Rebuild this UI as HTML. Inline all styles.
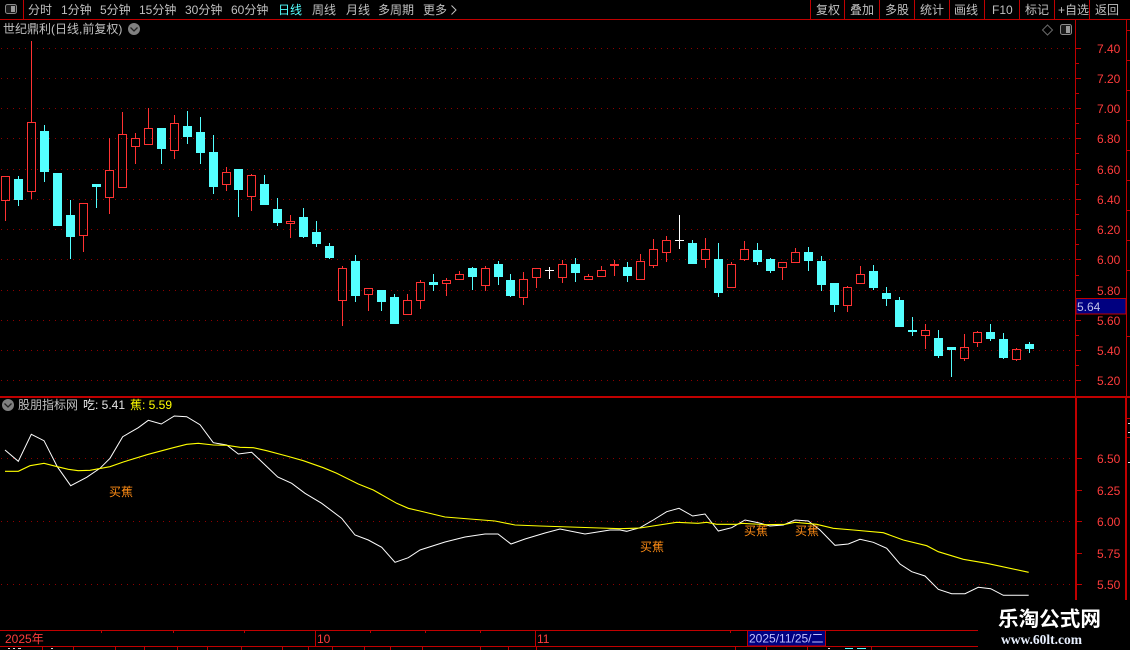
<!DOCTYPE html>
<html><head><meta charset="utf-8"><title>K</title>
<style>
html,body{margin:0;padding:0;background:#000;width:1130px;height:650px;overflow:hidden}
svg{display:block;position:absolute;left:0;top:0}
text{font-family:"Liberation Sans","WenQuanYi Zen Hei","Noto Sans CJK SC",sans-serif;font-size:12px}
.g{fill:#c0c0c0}.r{fill:#ff3c3c}.o{fill:#ff8c14}
</style></head><body>
<svg width="1130" height="650" viewBox="0 0 1130 650">
<rect width="1130" height="650" fill="#000"/>
<!-- grid -->
<g stroke="#8f0000" stroke-width="1" stroke-dasharray="1 5" shape-rendering="crispEdges">
<path d="M1 48.5H1075M1 78.5H1075M1 108.5H1075M1 138.5H1075M1 169.5H1075M1 199.5H1075M1 229.5H1075M1 259.5H1075M1 290.5H1075M1 320.5H1075M1 350.5H1075M1 380.5H1075M1 458.5H1075M1 521.5H1075M1 584.5H1075"/>
</g>
<!-- frame -->
<g stroke="#c00000" stroke-width="1" fill="none" shape-rendering="crispEdges">
<path d="M0 19.5H1130M23.5 0V19M810.5 0V19M844.5 0V19M879.5 0V19M914.5 0V19M949.5 0V19M984.5 0V19M1019.5 0V19M1054.5 0V19M1089.5 0V19"/>
<path d="M1075.5 20V396M1126.5 20V396"/>
<path d="M0 630.5H978M0 646.5H978"/>
<path d="M315.5 630V646M535.5 630V646M101.5 630V633M173.5 630V633M244.5 630V633M370.5 630V633M425.5 630V633M480.5 630V633M730.5 630V633"/>
<path d="M42.5 646V650M73.5 646V650M115.5 646V650M144.5 646V650M177.5 646V650M207.5 646V650M241.5 646V650M282.5 646V650M308.5 646V650M332.5 646V650M364.5 646V650M390.5 646V650M422.5 646V650M480.5 646V650M508.5 646V650M536.5 646V650M735.5 646V650M766.5 646V650M807.5 646V650M871.5 646V650"/>
<!-- axis ticks -->
<path d="M1076 48.5h5M1076 78.5h5M1076 108.5h5M1076 138.5h5M1076 169.5h5M1076 199.5h5M1076 229.5h5M1076 259.5h5M1076 290.5h5M1076 320.5h5M1076 350.5h5M1076 380.5h5M1076 63.5h3M1076 93.5h3M1076 123.5h3M1076 153.5h3M1076 184.5h3M1076 214.5h3M1076 244.5h3M1076 275.5h3M1076 305.5h3M1076 335.5h3M1076 365.5h3"/>
<path d="M1077 458.5h5M1077 490.5h5M1077 521.5h5M1077 553.5h5M1077 584.5h5"/>
<path d="M1127 30.5h3M1127 60.5h3M1127 90.5h3M1127 120.5h3M1127 150.5h3M1127 180.5h3M1127 210.5h3M1127 240.5h3M1127 270.5h3M1127 336.5h3M1127 418.5h3M1127 437.5h3"/>
</g>
<rect x="0" y="396" width="1130" height="2" fill="#c00000"/>
<rect x="1075" y="396" width="2" height="204" fill="#c00000"/>
<rect x="1125" y="396" width="2" height="204" fill="#c00000"/>
<path d="M1128 423.5h2M1128 432.5h2M1128 462.5h2" stroke="#ddd" shape-rendering="crispEdges"/>
<!-- red wicks + bodies -->
<path shape-rendering="crispEdges" fill="none" stroke="#ff3232" stroke-width="1" d="
M5.5 200V221M1.5 176.5h8v24h-8z
M31.5 41V122M31.5 191V199M27.5 122.5h8v69h-8z
M83.5 235V252M79.5 203.5h8v32h-8z
M109.5 138V170M109.5 197V214M105.5 170.5h8v27h-8z
M122.5 112V134M118.5 134.5h8v53h-8z
M135.5 133V138M135.5 146V164M131.5 138.5h8v8h-8z
M148.5 108V128M144.5 128.5h8v16h-8z
M174.5 115V123M174.5 150V159M170.5 123.5h8v27h-8z
M226.5 167V172M226.5 184V191M222.5 172.5h8v12h-8z
M251.5 174V175M251.5 196V211M247.5 175.5h8v21h-8z
M290.5 215V221M290.5 223V238M286.5 221.5h8v2h-8z
M342.5 266V268M342.5 300V326M338.5 268.5h8v32h-8z
M368.5 294V311M364.5 288.5h8v6h-8z
M407.5 294V300M403.5 300.5h8v14h-8z
M420.5 280V282M420.5 300V309M416.5 282.5h8v18h-8z
M446.5 278V280M446.5 283V296M442.5 280.5h8v3h-8z
M459.5 271V274M455.5 274.5h8v5h-8z
M485.5 266V268M485.5 285V291M481.5 268.5h8v17h-8z
M523.5 272V279M523.5 297V305M519.5 279.5h8v18h-8z
M536.5 277V288M532.5 268.5h8v9h-8z
M562.5 260V264M562.5 277V283M558.5 264.5h8v13h-8z
M588.5 274V276M584.5 276.5h8v3h-8z
M601.5 266V270M597.5 270.5h8v6h-8z
M614.5 260V276M610.5 264.5h8v1h-8z
M640.5 254V261M636.5 261.5h8v18h-8z
M653.5 239V249M653.5 265V268M649.5 249.5h8v16h-8z
M666.5 236V240M666.5 252V262M662.5 240.5h8v12h-8z
M705.5 238V249M705.5 259V268M701.5 249.5h8v10h-8z
M731.5 262V264M727.5 264.5h8v23h-8z
M744.5 241V249M744.5 259V261M740.5 249.5h8v10h-8z
M782.5 267V280M778.5 262.5h8v5h-8z
M795.5 248V252M791.5 252.5h8v10h-8z
M847.5 286V287M847.5 305V312M843.5 287.5h8v18h-8z
M860.5 266V274M860.5 283V284M856.5 274.5h8v9h-8z
M925.5 324V330M925.5 335V349M921.5 330.5h8v5h-8z
M964.5 334V347M964.5 358V361M960.5 347.5h8v11h-8z
M977.5 331V332M977.5 342V347M973.5 332.5h8v10h-8z
M1016.5 348V349M1016.5 359V361M1012.5 349.5h8v10h-8z"/>
<!-- cyan wicks -->
<path shape-rendering="crispEdges" fill="none" stroke="#54ffff" stroke-width="1" d="
M18.5 176V206M44.5 125V182M70.5 200V259M96.5 187V208M161.5 128V164M187.5 111V144M200.5 117V164M213.5 135V194M238.5 169V217M264.5 175V205M277.5 198V226M303.5 208V238M316.5 221V247M329.5 243V259M355.5 255V302M381.5 290V311M394.5 294V324M433.5 274V291M472.5 267V290M498.5 261V285M510.5 274V297M575.5 258V282M627.5 262V282M692.5 240V264M718.5 243V297M757.5 243V265M770.5 258V273M808.5 247V271M821.5 256V291M834.5 283V312M873.5 265V290M886.5 287V306M899.5 297V327M912.5 317V336M938.5 330V358M951.5 347V377M990.5 324V341M1003.5 333V359M1029.5 342V353"/>
<!-- cyan bodies -->
<path shape-rendering="crispEdges" fill="#54ffff" d="
M14 179h9v21h-9zM40 131h9v41h-9zM53 173h9v53h-9zM66 215h9v22h-9zM92 184h9v3h-9zM157 128h9v21h-9zM183 126h9v11h-9zM196 132h9v21h-9zM209 152h9v35h-9zM234 169h9v21h-9zM260 184h9v21h-9zM273 209h9v14h-9zM299 217h9v20h-9zM312 232h9v12h-9zM325 246h9v12h-9zM351 261h9v35h-9zM377 290h9v12h-9zM390 297h9v27h-9zM429 282h9v3h-9zM468 268h9v9h-9zM494 264h9v13h-9zM506 280h9v16h-9zM571 264h9v9h-9zM623 267h9v9h-9zM688 243h9v21h-9zM714 259h9v34h-9zM753 250h9v12h-9zM766 259h9v12h-9zM804 252h9v9h-9zM817 261h9v24h-9zM830 283h9v22h-9zM869 271h9v17h-9zM882 293h9v6h-9zM895 300h9v27h-9zM908 330h9v2h-9zM934 338h9v18h-9zM947 347h9v3h-9zM986 332h9v7h-9zM999 339h9v19h-9zM1025 344h9v5h-9z"/>
<!-- white crosses -->
<path shape-rendering="crispEdges" fill="none" stroke="#fff" d="M549.5 267V279M545 270.5h9M679.5 215V249M675 240.5h9"/>
<!-- indicator lines -->
<polyline fill="none" stroke="#ffffff" stroke-width="1" points="5,450 18.3,461.3 31.3,434.3 44,440.7 57.3,466.7 70.7,485.7 86.7,477.3 100,468.3 110,458.3 122.7,436.7 138.3,427.7 148.3,420.3 161.3,424 174.3,416 186.7,416.7 200,424.7 213.3,442.7 226.7,445 238.3,454 251.7,452.3 263.3,463.3 277.7,477 291.7,483.3 305,493.3 321.7,503.3 341.7,518.3 355,535 368.3,540 381.7,547.3 395,562.3 408.3,557.7 420,550 445,542 465,537 485,534 498,534 511,544 525,539 545,533 560,529 585,534 610,530 620,530 626.7,531.3 640,527.7 653.3,520 666.7,511.7 679,508.3 692.7,516 705,514 718.3,531 731.7,527.7 745,520 758.3,522.7 770,526 783.3,525 795,520 808.3,521 820,530 835,545.3 848.3,544 860,539.3 873.3,542.3 886.7,548.3 900,564 911.7,571.7 925,576 938.3,589.3 951.7,593.7 965,593.7 978.3,587.3 990.7,588.7 1003.3,595.3 1028.7,595.3"/>
<polyline fill="none" stroke="#ffff00" stroke-width="1.1" points="5,471.3 18.3,471.3 30,465.7 44,463.3 57.3,466.7 68.3,469.3 78.3,470.7 90,470.3 110,466.7 123.3,462 148.3,454.3 173.3,447.7 186.7,444.3 198.3,443.3 213.3,445 226.7,445.3 240,447.3 253.3,447.7 266.7,450.7 286.7,456 303.3,460.7 323.3,467.7 336.7,473.3 358.3,484 373.3,490 396.7,503.3 408.3,508.3 420,511 445,517 470,519 495,521 515,525 540,526 570,527 600,528 620,528.7 640,528 676.7,522.3 698,523.3 706.7,522.3 716.7,524.3 736.7,524.3 741.7,523.3 766.7,524.7 785,524.3 795,522.3 816.7,524.3 833.3,528.3 853.3,530 883.3,532.7 903.3,540 926.7,545.7 938.3,551.7 963.3,559.3 986.7,563.3 1028.7,572.3"/>
<!-- toolbar icon -->
<rect x="5.5" y="4.5" width="11" height="9" rx="2" fill="#1a1a1a" stroke="#8a8a8a"/>
<rect x="11" y="6" width="4" height="6" fill="#9a9a9a"/>
<!-- toolbar text -->
<g class="g">
<text class="g" x="28" y="14">分时</text>
<text class="g" x="61" y="14">1分钟</text>
<text class="g" x="100" y="14">5分钟</text>
<text class="g" x="139" y="14">15分钟</text>
<text class="g" x="185" y="14">30分钟</text>
<text class="g" x="231" y="14">60分钟</text>
<text x="278" y="14" fill="#54ffff">日线</text>
<text class="g" x="312" y="14">周线</text>
<text class="g" x="346" y="14">月线</text>
<text class="g" x="378" y="14">多周期</text>
<text class="g" x="423" y="14">更多</text>
<path d="M451.5 5.5l4.5 4.5-4.5 4.5" fill="none" stroke="#c0c0c0"/>
<text class="g" x="816" y="14">复权</text>
<text class="g" x="850" y="14">叠加</text>
<text class="g" x="885" y="14">多股</text>
<text class="g" x="920" y="14">统计</text>
<text class="g" x="954" y="14">画线</text>
<text class="g" x="992" y="14">F10</text>
<text class="g" x="1025" y="14">标记</text>
<text class="g" x="1058" y="14">+自选</text>
<text class="g" x="1095" y="14">返回</text>
</g>
<!-- title row -->
<text class="g" x="3" y="33">世纪鼎利(日线,前复权)</text>
<circle cx="134" cy="29" r="6" fill="#808080"/>
<path d="M130.5 27.5l3.5 3.5 3.5-3.5" fill="none" stroke="#222" stroke-width="1.3"/>
<path d="M1047.5 25l5 5-5 5-5-5z" fill="none" stroke="#6a6a6a"/>
<rect x="1060.5" y="24.5" width="11" height="10" rx="2" fill="#1a1a1a" stroke="#8a8a8a"/>
<rect x="1066" y="26" width="4" height="7" fill="#9a9a9a"/>
<!-- axis labels -->
<text class="r" x="1097" y="53">7.40</text>
<text class="r" x="1097" y="83">7.20</text>
<text class="r" x="1097" y="113">7.00</text>
<text class="r" x="1097" y="143">6.80</text>
<text class="r" x="1097" y="174">6.60</text>
<text class="r" x="1097" y="204">6.40</text>
<text class="r" x="1097" y="234">6.20</text>
<text class="r" x="1097" y="264">6.00</text>
<text class="r" x="1097" y="295">5.80</text>
<text class="r" x="1097" y="325">5.60</text>
<text class="r" x="1097" y="355">5.40</text>
<text class="r" x="1097" y="385">5.20</text>
<text class="r" x="1097" y="463">6.50</text>
<text class="r" x="1097" y="495">6.25</text>
<text class="r" x="1097" y="526">6.00</text>
<text class="r" x="1097" y="558">5.75</text>
<text class="r" x="1097" y="589">5.50</text>
<!-- price box -->
<rect x="1076" y="298.5" width="50" height="15.5" fill="#000080" stroke="#c00000" shape-rendering="crispEdges"/>
<text x="1077" y="311" fill="#c0c0e8">5.64</text>
<!-- lower header -->
<circle cx="8" cy="405" r="6" fill="#808080"/>
<path d="M4.5 403.5l3.5 3.5 3.5-3.5" fill="none" stroke="#222" stroke-width="1.3"/>
<text class="g" x="18" y="409">股朋指标网</text>
<text x="83" y="409" fill="#e6e6e6">吃: 5.41</text>
<text x="130" y="409" fill="#ffff00">蕉: 5.59</text>
<!-- signals -->
<text class="o" x="109" y="496">买蕉</text>
<text class="o" x="640" y="551">买蕉</text>
<text class="o" x="744" y="535">买蕉</text>
<text class="o" x="795" y="535">买蕉</text>
<!-- date axis -->
<text class="r" x="5" y="643">2025年</text>
<text class="r" x="317" y="643">10</text>
<text class="r" x="537" y="643">11</text>
<rect x="747.5" y="630.5" width="78" height="15.5" fill="#000080" stroke="#c00000" shape-rendering="crispEdges"/>
<text x="749" y="642.5" fill="#c0c0ff">2025/11/25/二</text>
<!-- bottom strip specks -->
<path shape-rendering="crispEdges" stroke="#ddd" d="M8 648.5h2M13 648.5h2M18 648.5h3M51 648.5h2M828 648.5h2"/>
<path shape-rendering="crispEdges" stroke="#54ffff" d="M845 648.5h8M857 648.5h9"/>
<!-- watermark -->
<rect x="978" y="600" width="152" height="50" fill="#000"/>
<text x="998" y="626" style="font-family:'Noto Sans CJK SC','WenQuanYi Zen Hei',sans-serif;font-size:20.6px;font-weight:700" fill="#fff">乐淘公式网</text>
<text x="1001" y="644" style="font-family:'Liberation Serif',serif;font-size:13.5px;font-weight:700" fill="#e8f0ff">www.60lt.com</text>
</svg>
</body></html>
